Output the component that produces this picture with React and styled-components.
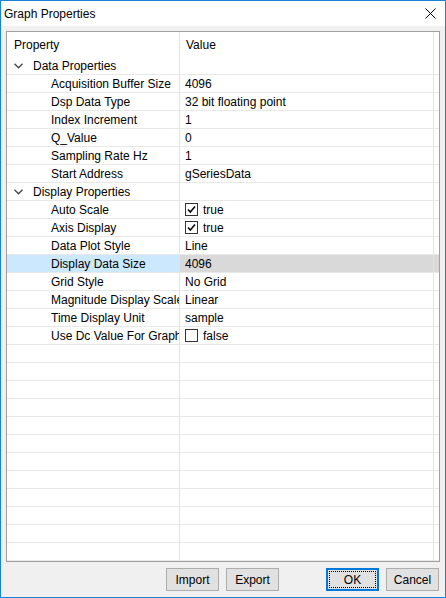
import React from 'react';
import styled, {createGlobalStyle} from 'styled-components';

const GlobalStyle = createGlobalStyle`
    html, body { margin:0; padding:0; background:#fff; }
    * { box-sizing:border-box; }
    body { font-family:"Liberation Sans", "Noto Sans CJK KR", sans-serif; font-size:12px; color:#000; }
`;

const Window = styled.div`
    width:446px;height:598px;border:1px solid #1883d7;display:flex;flex-direction:column;background:#f0f0f0;
`;
const TitleBar = styled.div`
    height:25px;background:#fff;display:flex;align-items:center;justify-content:space-between;padding:0 9px 0 3px;
    span{ font-size:12px; }
`;
const Body = styled.div`
    flex:1;display:flex;flex-direction:column;padding:5px 5px 0 5px;
`;
const Grid = styled.div`
    height:531px;border:1px solid #a0a0a0;background:#fff;overflow:hidden;
`;
const Row = styled.div`
    display:grid;grid-template-columns:173px 254px 1fr;
    height:${p => p.$header ? 25 : 18}px;
    border-bottom:${p => p.$header ? 'none' : '1px solid #e8e8e8'};
`;
const Cell = styled.div`
    display:flex;align-items:center;white-space:nowrap;overflow:hidden;
    padding-left:${p => p.$pad || 0}px;
    border-right:${p => p.$last ? 'none' : '1px solid #e3e3e3'};
    background:${p => p.$bg || 'transparent'};
    gap:${p => p.$gap || 0}px;
`;
const Check = styled.span`
    width:13px;height:13px;border:1px solid #333;background:#fff;display:inline-flex;align-items:center;justify-content:center;
`;
const Footer = styled.div`
    height:35px;display:flex;align-items:center;justify-content:flex-end;padding-right:1px;
`;
const Button = styled.button`
    width:53px;height:23px;margin-left:${p => p.$ml || 7}px;font-family:inherit;font-size:12px;color:#000;
    background:#e1e1e1;border:1px solid ${p => p.$focus ? '#0078d7' : '#adadad'};padding:0;
    box-shadow:${p => p.$focus ? 'inset 0 0 0 1px #0078d7' : 'none'};
    outline:${p => p.$focus ? '1px dotted #000' : 'none'};outline-offset:-4px;
`;

const Chevron = () => (
    <svg width="9" height="6" viewBox="0 0 9 6">
        <polyline points="0.5,0.8 4.5,4.8 8.5,0.8" fill="none" stroke="#444" strokeWidth="1.3" />
    </svg>
);

const Tick = () => (
    <svg width="11" height="11" viewBox="0 0 11 11">
        <polyline points="2,5.5 4.3,8 9,2.5" fill="none" stroke="#000" strokeWidth="1.5" />
    </svg>
);

const rows = [
    {group:'Data Properties'},
    {label:'Acquisition Buffer Size', value:'4096'},
    {label:'Dsp Data Type', value:'32 bit floating point'},
    {label:'Index Increment', value:'1'},
    {label:'Q_Value', value:'0'},
    {label:'Sampling Rate Hz', value:'1'},
    {label:'Start Address', value:'gSeriesData'},
    {group:'Display Properties'},
    {label:'Auto Scale', value:'true', check:true},
    {label:'Axis Display', value:'true', check:true},
    {label:'Data Plot Style', value:'Line'},
    {label:'Display Data Size', value:'4096', selected:true},
    {label:'Grid Style', value:'No Grid'},
    {label:'Magnitude Display Scale', value:'Linear'},
    {label:'Time Display Unit', value:'sample'},
    {label:'Use Dc Value For Graph', value:'false', check:false},
];

const App = () => {
    const fillers = Array.from({length:14});
    return (
        <>
            <GlobalStyle />
            <Window>
                <TitleBar>
                    <span>Graph Properties</span>
                    <svg width="11" height="11" viewBox="0 0 11 11">
                        <path d="M0.5 0.5 L10.5 10.5 M10.5 0.5 L0.5 10.5" stroke="#000" strokeWidth="1" />
                    </svg>
                </TitleBar>
                <Body>
                    <Grid>
                        <Row $header>
                            <Cell $pad={7}>Property</Cell>
                            <Cell $pad={6}>Value</Cell>
                            <Cell $last />
                        </Row>
                        {rows.map((r, i) => r.group ? (
                            <Row key={i}>
                                <Cell $pad={7} $gap={10}><Chevron />{r.group}</Cell>
                                <Cell />
                                <Cell $last />
                            </Row>
                        ) : (
                            <Row key={i}>
                                <Cell $pad={44} $bg={r.selected ? '#cce8ff' : null}>{r.label}</Cell>
                                <Cell $pad={5} $gap={5} $bg={r.selected ? '#d9d9d9' : null}>
                                    {r.check !== undefined && <Check>{r.check && <Tick />}</Check>}
                                    {r.value}
                                </Cell>
                                <Cell $last $bg={r.selected ? '#d9d9d9' : null} />
                            </Row>
                        ))}
                        {fillers.map((_, i) => (
                            <Row key={'f' + i}>
                                <Cell />
                                <Cell />
                                <Cell $last />
                            </Row>
                        ))}
                    </Grid>
                    <Footer>
                        <Button>Import</Button>
                        <Button>Export</Button>
                        <Button $ml={47} $focus>OK</Button>
                        <Button>Cancel</Button>
                    </Footer>
                </Body>
            </Window>
        </>
    );
};

export default App;
